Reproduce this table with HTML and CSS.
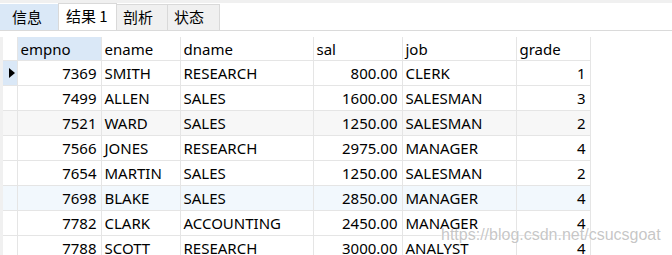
FILE: index.html
```html
<!DOCTYPE html>
<html lang="zh">
<head>
    <meta charset="UTF-8">
    <title>结果 1</title>
    <link rel="stylesheet" href="styles.css">
</head>
<body>
    <div class="tabbar">
        <div class="tab tab-info">信息</div>
        <div class="tab tab-result active">结果 1</div>
        <div class="tab tab-profile">剖析</div>
        <div class="tab tab-status">状态</div>
    </div>

    <div class="grid">
        <table class="result">
            <colgroup>
                <col class="c-gutter">
                <col class="c-empno">
                <col class="c-ename">
                <col class="c-dname">
                <col class="c-sal">
                <col class="c-job">
                <col class="c-grade">
            </colgroup>
            <thead>
                <tr>
                    <th class="gutter"></th>
                    <th class="sorted">empno</th>
                    <th>ename</th>
                    <th>dname</th>
                    <th>sal</th>
                    <th>job</th>
                    <th>grade</th>
                </tr>
            </thead>
            <tbody>
                <tr class="current">
                    <td class="gutter"><span class="cursor"></span></td>
                    <td class="num">7369</td><td>SMITH</td><td>RESEARCH</td><td class="num">800.00</td><td>CLERK</td><td class="num">1</td>
                </tr>
                <tr>
                    <td class="gutter"></td>
                    <td class="num">7499</td><td>ALLEN</td><td>SALES</td><td class="num">1600.00</td><td>SALESMAN</td><td class="num">3</td>
                </tr>
                <tr class="shade">
                    <td class="gutter"></td>
                    <td class="num">7521</td><td>WARD</td><td>SALES</td><td class="num">1250.00</td><td>SALESMAN</td><td class="num">2</td>
                </tr>
                <tr>
                    <td class="gutter"></td>
                    <td class="num">7566</td><td>JONES</td><td>RESEARCH</td><td class="num">2975.00</td><td>MANAGER</td><td class="num">4</td>
                </tr>
                <tr>
                    <td class="gutter"></td>
                    <td class="num">7654</td><td>MARTIN</td><td>SALES</td><td class="num">1250.00</td><td>SALESMAN</td><td class="num">2</td>
                </tr>
                <tr class="hover">
                    <td class="gutter"></td>
                    <td class="num">7698</td><td>BLAKE</td><td>SALES</td><td class="num">2850.00</td><td>MANAGER</td><td class="num">4</td>
                </tr>
                <tr>
                    <td class="gutter"></td>
                    <td class="num">7782</td><td>CLARK</td><td>ACCOUNTING</td><td class="num">2450.00</td><td>MANAGER</td><td class="num">4</td>
                </tr>
                <tr>
                    <td class="gutter"></td>
                    <td class="num">7788</td><td>SCOTT</td><td>RESEARCH</td><td class="num">3000.00</td><td>ANALYST</td><td class="num">4</td>
                </tr>
            </tbody>
        </table>
    </div>

    <div class="watermark">https://blog.csdn.net/csucsgoat</div>
</body>
</html>
```

FILE: styles.css
```css
body {
    margin: 0;
    padding: 0;
    background: #ffffff;
    font-family: "Noto Sans", "Noto Sans CJK SC", sans-serif;
    font-size: 15px;
    color: #000000;
    overflow: hidden;
    height: 255px;
    position: relative;
}

.tabbar {
    display: flex;
    align-items: flex-end;
    height: 27px;
    border-top: 3px solid #f0f0f0;
    border-bottom: 1px solid #dadada;
}

.tab {
    box-sizing: border-box;
    height: 26px;
    line-height: 24px;
    background: #f0f0f0;
    border: 1px solid #d9d9d9;
    border-bottom: none;
    border-left: none;
    font-family: "Noto Sans CJK SC", sans-serif;
    font-size: 15px;
    padding-left: 6px;
}

.tab-info {
    width: 58px;
    padding-left: 12px;
    background: #dae8f7;
    border-color: #dae8f7;
}

.tab-result {
    width: 59px;
    padding-left: 7px;
}

.tab-profile {
    width: 51px;
}

.tab-status {
    width: 52px;
}

.tab.active {
    height: 27px;
    background: #ffffff;
    border-left: 1px solid #d9d9d9;
}

.grid {
    margin-top: 6px;
    border-left: 3px solid #f0f0f0;
    height: 230px;
}

.result {
    border-collapse: collapse;
    table-layout: fixed;
    width: 587px;
}

.c-gutter { width: 14px; }
.c-empno { width: 84px; }
.c-ename { width: 79px; }
.c-dname { width: 133px; }
.c-sal { width: 89px; }
.c-job { width: 114px; }
.c-grade { width: 74px; }

.result th,
.result td {
    padding: 0 3px;
    text-align: left;
    font-weight: normal;
    white-space: nowrap;
    overflow: hidden;
    border: 1px solid #e5e5e5;
}

.result th {
    height: 23px;
    border-top: none;
    line-height: 22px;
}

.result td {
    height: 24px;
    line-height: 22px;
}

.result th:first-child,
.result td:first-child {
    border-left: none;
}

.result th.sorted {
    background: #dae8f7;
}

.result td.num {
    text-align: right;
    padding-right: 4px;
}

.result .gutter {
    padding: 0;
}

.current td.gutter {
    background: #dae8f7;
}

.cursor {
    display: block;
    width: 0;
    height: 0;
    margin-left: 6px;
    border-top: 5px solid transparent;
    border-bottom: 5px solid transparent;
    border-left: 6px solid #000000;
}

.shade td {
    background: #f7f7f7;
}

.hover td {
    background: #f2f8fd;
}

.watermark {
    position: absolute;
    left: 441px;
    top: 226px;
    font-family: "Liberation Sans", Arial, sans-serif;
    font-size: 16px;
    color: rgba(150, 150, 150, 0.55);
    text-shadow: 0 0 1px #ffffff, 0 0 1px #ffffff;
}
```
